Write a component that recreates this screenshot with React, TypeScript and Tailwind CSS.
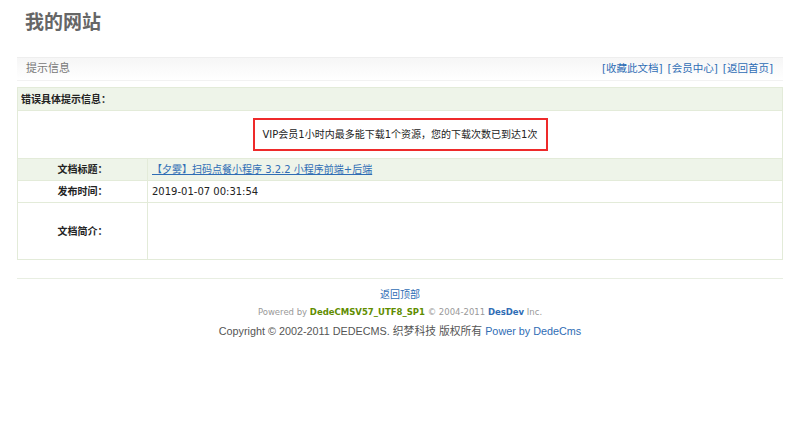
import React from 'react';

const font = { fontFamily: '"DejaVu Sans", Verdana, "Noto Sans CJK SC", sans-serif' };

const App: React.FC = () => {
  return (
    <div className="min-h-[426px] w-[800px] bg-white text-[10px] text-[#333]" style={font}>
      {/* 顶部标题 */}
      <div className="px-[25px] pt-[9px] h-[57px]">
        <h1 className="text-[19px] font-bold leading-[26px] text-[#666]">我的网站</h1>
      </div>

      <div className="mx-[17px] w-[766px]">
        {/* 提示信息 栏 */}
        <div className="flex h-[23px] items-center justify-between border-t border-[#eeeeee] bg-gradient-to-b from-[#f6f6f6] to-white pl-[9px] pr-[10px] shadow-[0_1px_0_#f2f2f2]">
          <span className="text-[11px] text-[#777]">提示信息</span>
          <div className="flex gap-[5px] text-[10.5px] text-[#2f6db5]">
            <a href="#">[收藏此文档]</a>
            <a href="#">[会员中心]</a>
            <a href="#">[返回首页]</a>
          </div>
        </div>

        {/* 表格 */}
        <div className="mt-[7px] border border-[#e3ebd9]">
          <div className="flex h-[23px] items-center border-b border-[#e3ebd9] bg-[#eef4e9] px-[3px] font-bold text-[#222]">
            错误具体提示信息：
          </div>
          <div className="flex h-[48px] items-center justify-center border-b border-[#e3ebd9]">
            <div className="flex h-[33px] w-[295px] items-center justify-center whitespace-nowrap border-2 border-[#ee2a2a] text-[10px] text-[#222]">
              VIP会员1小时内最多能下载1个资源，您的下载次数已到达1次
            </div>
          </div>
          <div className="grid grid-cols-[130px_1fr]">
            <div className="flex h-[22px] items-center justify-center border-b border-r border-[#e3ebd9] bg-[#eef4e9] font-bold text-[#222]">
              文档标题：
            </div>
            <div className="flex h-[22px] items-center border-b border-[#e3ebd9] bg-[#eef4e9] px-[4px]">
              <a href="#" className="text-[#2f6db5] underline">【夕雾】扫码点餐小程序 3.2.2 小程序前端+后端</a>
            </div>
            <div className="flex h-[22px] items-center justify-center border-b border-r border-[#e3ebd9] font-bold text-[#222]">
              发布时间：
            </div>
            <div className="flex h-[22px] items-center border-b border-[#e3ebd9] px-[4px] text-[#222]">
              2019-01-07 00:31:54
            </div>
            <div className="flex h-[56px] items-center justify-center border-r border-[#e3ebd9] font-bold text-[#222]">
              文档简介：
            </div>
            <div className="h-[56px]"></div>
          </div>
        </div>

        {/* 页脚 */}
        <div className="mt-[18px] border-t border-[#e8eee2] pt-[9px] text-center">
          <div className="leading-[14px]">
            <a href="#" className="text-[10px] text-[#2f6db5]">返回顶部</a>
          </div>
          <div className="mt-[3px] text-[8.5px] leading-[14px] text-[#999]">
            Powered by <span className="font-bold text-[#5f8d00]">DedeCMSV57_UTF8_SP1</span> © 2004-2011{' '}
            <span className="font-bold text-[#2f6db5]">DesDev</span> Inc.
          </div>
          <div
            className="mt-[4px] text-[10.8px] leading-[16px] text-[#555]"
            style={{ fontFamily: '"Liberation Sans", Arial, "Noto Sans CJK SC", sans-serif' }}
          >
            Copyright © 2002-2011 DEDECMS. 织梦科技 版权所有{' '}
            <a href="#" className="text-[#2f6db5]">Power by DedeCms</a>
          </div>
        </div>
      </div>
    </div>
  );
};

export default App;
